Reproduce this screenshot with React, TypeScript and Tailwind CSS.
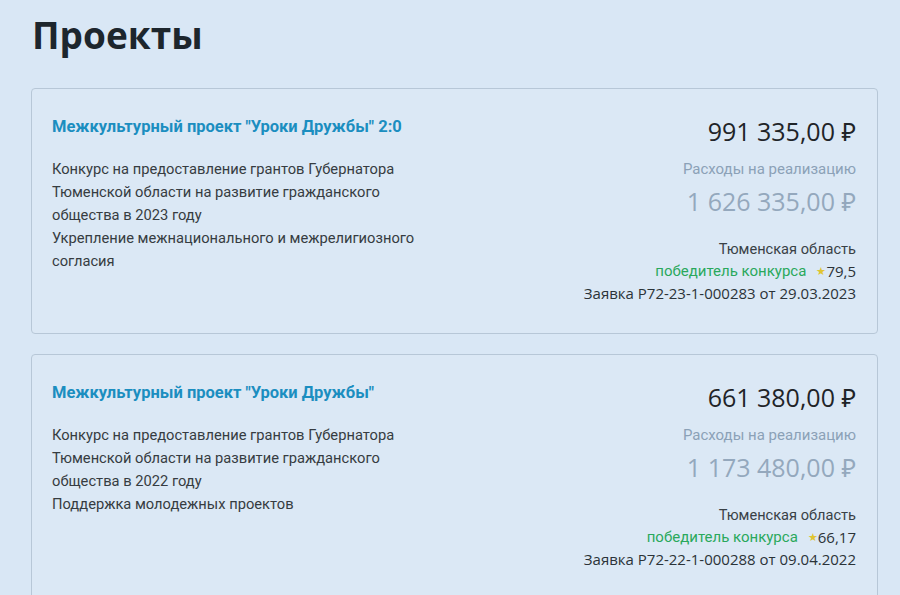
import React from "react";

type Project = {
    title: string;
    lines: string[];
    amount: string;
    total: string;
    region: string;
    score: string;
    request: string;
};

const projects: Project[] = [
    {
        title: 'Межкультурный проект "Уроки Дружбы" 2:0',
        lines: [
            "Конкурс на предоставление грантов Губернатора",
            "Тюменской области на развитие гражданского",
            "общества в 2023 году",
            "Укрепление межнационального и межрелигиозного",
            "согласия",
        ],
        amount: "991 335,00 ₽",
        total: "1 626 335,00 ₽",
        region: "Тюменская область",
        score: "79,5",
        request: "Заявка P72-23-1-000283 от 29.03.2023",
    },
    {
        title: 'Межкультурный проект "Уроки Дружбы"',
        lines: [
            "Конкурс на предоставление грантов Губернатора",
            "Тюменской области на развитие гражданского",
            "общества в 2022 году",
            "Поддержка молодежных проектов",
        ],
        amount: "661 380,00 ₽",
        total: "1 173 480,00 ₽",
        region: "Тюменская область",
        score: "66,17",
        request: "Заявка P72-22-1-000288 от 09.04.2022",
    },
];

const roboto = { fontFamily: 'Roboto, "Noto Sans", sans-serif' };

function ProjectCard({ p }: { p: Project }) {
    return (
        <div className="h-[246px] rounded-[4px] border border-[#b7c7d7] bg-[#dbe8f5] px-5 pt-[27px] flex justify-between">
            <div className="flex flex-col" style={roboto}>
                <h2 className="text-[16.5px] leading-[22px] font-bold text-[#1b8ec0]">{p.title}</h2>
                <div className="mt-[20px] text-[14.7px] leading-[23px] text-[#363c41]">
                    {p.lines.map((l, i) => (
                        <div key={i}>{l}</div>
                    ))}
                </div>
            </div>
            <div className="flex flex-col items-end text-right pr-[1px]">
                <div className="text-[25px] leading-[30px] text-[#1f2428]">{p.amount}</div>
                <div className="mt-[13px] text-[15px] leading-[20px] text-[#8ba1b7]" style={roboto}>Расходы на реализацию</div>
                <div className="mt-[7px] text-[25px] leading-[30px] text-[#94a8bd]">{p.total}</div>
                <div className="mt-[22px] text-[14.6px] leading-[22px] text-[#394146]" style={roboto}>{p.region}</div>
                <div className="text-[15px] leading-[22px] flex items-center">
                    <span className="text-[#2aa85c]" style={roboto}>победитель конкурса</span>
                    <span className="ml-[10px] text-[11px] text-[#e0c531]">★</span>
                    <span className="text-[#2b3338]">{p.score}</span>
                </div>
                <div className="text-[15px] leading-[22px] text-[#2b3338]">{p.request}</div>
            </div>
        </div>
    );
}

export default function App() {
    return (
        <div className="min-h-[595px] bg-[#d9e7f5] px-[31px] pt-[11px] overflow-hidden" style={{ fontFamily: '"Open Sans", "Noto Sans", sans-serif' }}>
            <h1 className="text-[37px] leading-[48px] font-bold text-[#1d262d] pl-[1px]">Проекты</h1>
            <div className="mt-[29px] w-[847px] flex flex-col gap-[20px]">
                {projects.map((p, i) => (
                    <ProjectCard key={i} p={p} />
                ))}
            </div>
        </div>
    );
}
